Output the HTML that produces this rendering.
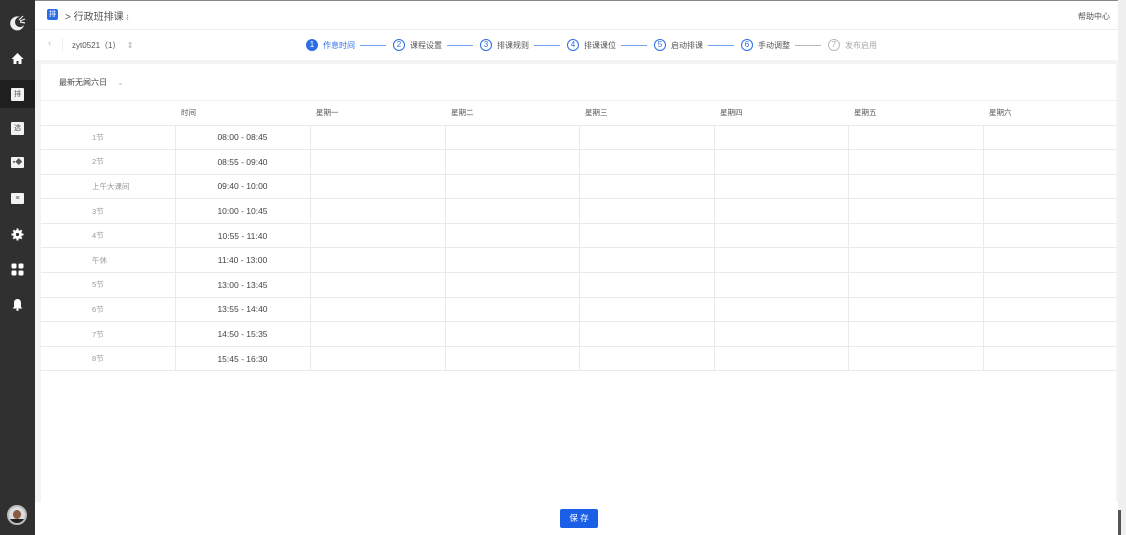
<!DOCTYPE html>
<html><head><meta charset="utf-8"><style>
*{margin:0;padding:0;box-sizing:border-box}
body{width:1126px;height:535px;overflow:hidden;background:#f4f4f4;font-family:"Liberation Sans","Noto Sans CJK SC",sans-serif;position:relative;color:#333}
.sb{position:absolute;left:0;top:0;width:35px;height:535px;background:#303030}
.ic{position:absolute;left:11px;width:13px;height:13px}
.sq{background:#f2f2f2;border-radius:1px;font-size:7px;color:#555;text-align:center;line-height:13px}
.top{position:absolute;left:35px;top:0;right:0;height:30px;background:#fff;border-top:1px solid #888;border-bottom:1px solid #eee}
.bar2{position:absolute;left:35px;top:30px;right:8px;height:30px;background:#fff}
.card{position:absolute;left:41px;top:64px;width:1075px;height:438px;background:#fff}
.foot{position:absolute;left:35px;top:502px;right:8px;height:33px;background:#fff}
table{position:absolute;left:41px;top:100px;border-collapse:collapse;font-size:7.5px}
td{height:24.6px;border-bottom:1px solid #eaeaea;border-right:1px solid #eaeaea;padding-left:6px;color:#666}
th{height:25px;border-bottom:1px solid #eaeaea;font-weight:normal;text-align:left;padding-left:6px;color:#555;font-size:7.5px}
td.t{text-align:center;padding:0;color:#444;font-size:8.5px}
td.l{padding-left:51px;color:#999}
.step{position:absolute;top:39px;font-size:8px;color:#2b6de8;display:flex;align-items:center;white-space:nowrap}
.c{flex-shrink:0;width:12px;height:12px;border-radius:50%;border:1px solid #2b6de8;text-align:center;line-height:10px;font-size:8px;margin-right:5px}
.ln{flex-shrink:0;width:26px;height:1px;background:#6fa2ef;margin-left:5px}
</style></head><body>
<div class="sb">
<svg class="ic" style="top:14px;left:9px;width:17px;height:17px" viewBox="0 0 17 17"><path d="M11 3 A7 7 0 1 0 15 11 A5 5 0 1 1 11 3Z" fill="#eee"/><path d="M10 6l4-4M11 7l5-2M11 8l5 1" stroke="#eee" stroke-width="1.2"/></svg>
<svg class="ic" style="top:52px" viewBox="0 0 13 13"><path d="M6.5 1L0.5 7h2v5h3V9h2v3h3V7h2z" fill="#fff"/></svg>
<div style="position:absolute;left:0;top:80px;width:35px;height:28px;background:#1f1f1f"></div>
<div class="ic sq" style="top:88px">排</div>
<div class="ic sq" style="top:122px">选</div>
<div class="ic sq" style="top:157px;height:11px;line-height:11px">▪◆</div>
<div class="ic sq" style="top:193px;height:11px;line-height:11px">≡</div>
<svg class="ic" style="top:228px" viewBox="0 0 13 13"><circle cx="6.5" cy="6.5" r="4.5" fill="#fff"/><path d="M6.5 0.5v12M0.5 6.5h12M2.3 2.3l8.4 8.4M10.7 2.3l-8.4 8.4" stroke="#fff" stroke-width="2"/><circle cx="6.5" cy="6.5" r="1.6" fill="#303030"/></svg>
<svg class="ic" style="top:263px" viewBox="0 0 13 13"><rect x="0.5" y="0.5" width="5" height="5" rx="1.2" fill="#fff"/><rect x="7.5" y="0.5" width="5" height="5" rx="1.2" fill="#fff"/><rect x="0.5" y="7.5" width="5" height="5" rx="1.2" fill="#fff"/><rect x="7.5" y="7.5" width="5" height="5" rx="1.2" fill="#fff"/></svg>
<svg class="ic" style="top:298px" viewBox="0 0 13 13"><path d="M6.5 1C4 1 3 3 3 5v4L1.5 10.5h10L10 9V5C10 3 9 1 6.5 1z" fill="#fff"/><circle cx="6.5" cy="11.7" r="1.2" fill="#fff"/></svg>
<div style="position:absolute;left:7px;top:505px;width:20px;height:20px;border-radius:50%;background:#ddd;border:2px solid #bbb;overflow:hidden"><div style="width:8px;height:9px;background:#8a5a44;border-radius:50%;margin:3px auto 0"></div><div style="width:14px;height:6px;background:#222;margin:0 auto"></div></div>
</div>
<div class="top">
<div style="position:absolute;left:12px;top:8px;width:11px;height:11px;background:#2b6de8;border-radius:2px;color:#fff;font-size:7px;text-align:center;line-height:11px">排</div>
<div style="position:absolute;left:30px;top:7px;font-size:10px;color:#555">&gt; 行政班排课 <span style="font-size:8px">⁝</span></div>
<div style="position:absolute;right:16px;top:10px;font-size:8px;color:#555">帮助中心</div>
</div>
<div class="bar2">
<div style="position:absolute;left:13px;top:8px;font-size:10px;color:#bbb">‹</div>
<div style="position:absolute;left:27px;top:8px;width:1px;height:14px;background:#eee"></div>
<div style="position:absolute;left:37px;top:10px;font-size:8px;color:#555">zyt0521（1） <span style="color:#aaa;margin-left:4px">⇕</span></div>
</div>
<div class="step" style="left:306px"><div class="c" style="background:#2b6de8;color:#fff">1</div>作息时间<div class="ln"></div></div>
<div class="step" style="left:393px"><div class="c">2</div><span style="color:#555">课程设置</span><div class="ln"></div></div>
<div class="step" style="left:480px"><div class="c">3</div><span style="color:#555">排课规则</span><div class="ln"></div></div>
<div class="step" style="left:567px"><div class="c">4</div><span style="color:#555">排课课位</span><div class="ln"></div></div>
<div class="step" style="left:654px"><div class="c">5</div><span style="color:#555">启动排课</span><div class="ln"></div></div>
<div class="step" style="left:741px"><div class="c">6</div><span style="color:#555">手动调整</span><div class="ln" style="background:#bbb"></div></div>
<div class="step" style="left:828px;color:#aaa"><div class="c" style="border-color:#bbb">7</div>发布启用</div>
<div class="card"><div style="position:absolute;left:18px;top:13px;font-size:8px;color:#444">最新无闻六日 <span style="color:#bbb;margin-left:8px">⌄</span></div><div style="position:absolute;left:0;right:0;top:36px;height:1px;background:#f0f0f0"></div></div>
<table>
<tr><th style="width:134px"></th><th style="width:135px">时间</th><th style="width:135px">星期一</th><th style="width:134px">星期二</th><th style="width:135px">星期三</th><th style="width:134px">星期四</th><th style="width:135px">星期五</th><th style="width:133px">星期六</th></tr>
<tr><td class="l">1节</td><td class="t">08:00 - 08:45</td><td></td><td></td><td></td><td></td><td></td><td style="border-right:0"></td></tr>
<tr><td class="l">2节</td><td class="t">08:55 - 09:40</td><td></td><td></td><td></td><td></td><td></td><td style="border-right:0"></td></tr>
<tr><td class="l">上午大课间</td><td class="t">09:40 - 10:00</td><td></td><td></td><td></td><td></td><td></td><td style="border-right:0"></td></tr>
<tr><td class="l">3节</td><td class="t">10:00 - 10:45</td><td></td><td></td><td></td><td></td><td></td><td style="border-right:0"></td></tr>
<tr><td class="l">4节</td><td class="t">10:55 - 11:40</td><td></td><td></td><td></td><td></td><td></td><td style="border-right:0"></td></tr>
<tr><td class="l">午休</td><td class="t">11:40 - 13:00</td><td></td><td></td><td></td><td></td><td></td><td style="border-right:0"></td></tr>
<tr><td class="l">5节</td><td class="t">13:00 - 13:45</td><td></td><td></td><td></td><td></td><td></td><td style="border-right:0"></td></tr>
<tr><td class="l">6节</td><td class="t">13:55 - 14:40</td><td></td><td></td><td></td><td></td><td></td><td style="border-right:0"></td></tr>
<tr><td class="l">7节</td><td class="t">14:50 - 15:35</td><td></td><td></td><td></td><td></td><td></td><td style="border-right:0"></td></tr>
<tr><td class="l">8节</td><td class="t">15:45 - 16:30</td><td></td><td></td><td></td><td></td><td></td><td style="border-right:0"></td></tr>
</table>
<div class="foot"><div style="position:absolute;left:525px;top:7px;width:38px;height:19px;background:#1a5fe6;border-radius:2px;color:#fff;font-size:8.5px;text-align:center;line-height:19px">保 存</div></div>
<div style="position:absolute;right:0;top:0;width:8px;height:535px;background:#f0f0f0"></div>
<div style="position:absolute;left:1118px;top:510px;width:3px;height:25px;background:#555"></div>
</body></html>
